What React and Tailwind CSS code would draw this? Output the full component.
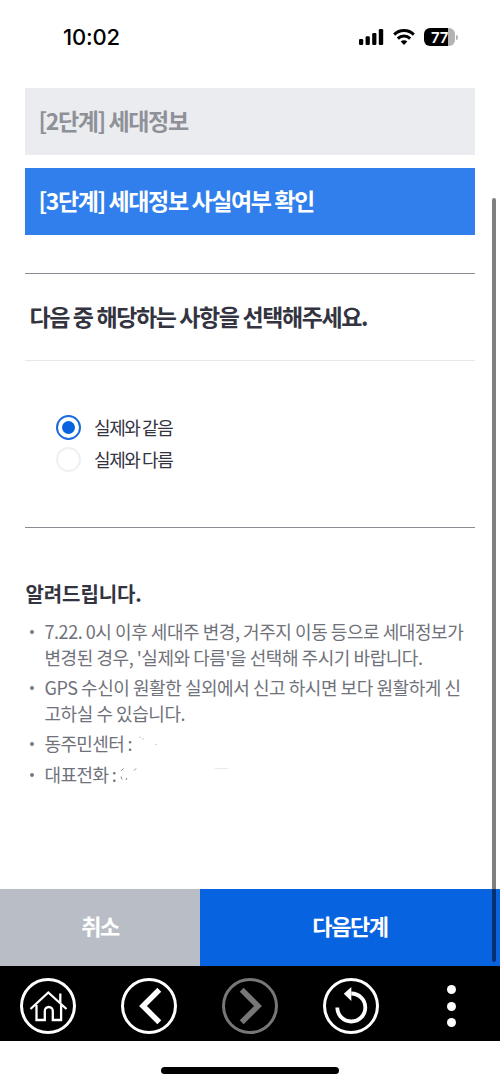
import { useState } from "react";

const options = ["실제와 같음", "실제와 다름"];

const StatusBar = () => (
  <div className="flex h-[88px] items-start justify-between pl-[63px] pr-[42px]">
    <span className="mt-[23px] font-['Inter'] text-[22px] font-medium leading-[28px] tracking-[-0.2px] text-black">
      10:02
    </span>
    <div className="mt-[28px] flex h-[18px] items-center">
      <svg width="26" height="18" viewBox="0 0 26 18" className="mr-[8px]">
        <rect x="0" y="11" width="4.2" height="6" rx="1.2" />
        <rect x="6.6" y="8.3" width="4.2" height="8.7" rx="1.2" />
        <rect x="13.2" y="5" width="4.2" height="12" rx="1.2" />
        <rect x="19.8" y="1" width="4.4" height="16" rx="1.2" />
      </svg>
      <svg width="22" height="18" viewBox="0 0 22 18" fill="none" stroke="#000" strokeWidth="3" className="mr-[9px]">
        <path d="M1.2 6.6a14 14 0 0 1 19.6 0" />
        <path d="M4.8 10.6a8.9 8.9 0 0 1 12.4 0" />
        <path d="M11 17l-3.3-3.4a4.6 4.6 0 0 1 6.6 0z" fill="#000" stroke="none" />
      </svg>
      <div className="flex h-[18px] w-[31px] items-center justify-center overflow-hidden rounded-[6px] bg-[linear-gradient(to_right,#000_78%,#b3b3b3_78%)]">
        <span className="font-['Inter'] text-[15px] font-semibold leading-none tracking-[-0.3px] text-white">77</span>
      </div>
      <div className="ml-[1px] h-[5px] w-[2px] rounded-r-full bg-[#b3b3b3]" />
    </div>
  </div>
);

const Radio = ({ label, checked, onSelect }) => (
  <button onClick={onSelect} className="flex h-8 items-center">
    <span
      className={
        checked
          ? "flex size-[25px] items-center justify-center rounded-full border-2 border-[#1a6ae0]"
          : "flex size-[25px] rounded-full border-2 border-[#f0f0f2]"
      }
    >
      {checked && <span className="size-[13px] rounded-full bg-[#0763df]" />}
    </span>
    <span className="ml-[13px] pb-[1px] text-[18px] leading-[30px] tracking-[-1.4px] text-[#33343f]">{label}</span>
  </button>
);

const Notice = ({ children }) => (
  <li className="flex">
    <span className="ml-[5px] mr-[10.5px] mt-[11px] size-[4px] shrink-0 rounded-full bg-[#777982]" />
    <div className="flex whitespace-nowrap">{children}</div>
  </li>
);

const NavIcon = ({ children, color = "#fff" }) => (
  <button>
    <svg width="56" height="56" viewBox="0 0 56 56" fill="none" stroke={color}>
      <circle cx="28" cy="28" r="26.5" strokeWidth="3" />
      {children}
    </svg>
  </button>
);

const App = () => {
  const [selected, setSelected] = useState(0);

  return (
    <div className="relative flex h-[1083px] w-[500px] flex-col overflow-hidden bg-white font-['Noto_Sans_CJK_KR',sans-serif]">
      <StatusBar />

      <main className="mx-[25px] flex-1">
        <h2 className="flex h-[67px] items-center bg-[#ebecf0] pb-[2px] pl-[13.5px] text-[23px] font-bold tracking-[-1.4px] text-[#8f9198]">
          [2단계] 세대정보
        </h2>
        <h2 className="mt-[13px] flex h-[67px] items-center bg-[#307fec] pb-[2px] pl-[13.5px] text-[23px] font-bold tracking-[-1.4px] text-white">
          [3단계] 세대정보 사실여부 확인
        </h2>

        <section className="mt-[38px] border-y border-[#8b8c93]">
          <h3 className="flex h-[87px] items-center border-b border-[#e8e8ea] pb-[1px] pl-[4.5px] text-[23px] font-bold tracking-[-1.4px] text-[#33343f]">
            다음 중 해당하는 사항을 선택해주세요.
          </h3>
          <div className="flex h-[166px] flex-col pl-[31px] pt-[50px]">
            {options.map((label, i) => (
              <Radio key={label} label={label} checked={selected === i} onSelect={() => setSelected(i)} />
            ))}
          </div>
        </section>

        <h4 className="mt-[50px] pl-[0.5px] text-[20px] font-bold leading-[32px] tracking-[-0.1px] text-[#33343f]">
          알려드립니다.
        </h4>
        <ul className="mt-[9px] flex flex-col gap-[5px] text-[18px] leading-[25.5px] tracking-[-0.45px] text-[#70727b]">
          <Notice>
            <p>
              7.22. 0시 이후 세대주 변경, 거주지 이동 등으로 세대정보가
              <br />
              변경된 경우, '실제와 다름'을 선택해 주시기 바랍니다.
            </p>
          </Notice>
          <Notice>
            <p>
              GPS 수신이 원활한 실외에서 신고 하시면 보다 원활하게 신
              <br />
              고하실 수 있습니다.
            </p>
          </Notice>
          <Notice>
            <span className="tracking-[-0.65px]">동주민센터 :</span>
            <svg width="30" height="25" viewBox="0 0 30 25" fill="none" stroke="#c9cad0">
              <path d="M7 6l2 .5M10 8.500l2-1M23 13.500h1.500" />
            </svg>
          </Notice>
          <Notice>
            <span className="tracking-[-0.6px]">대표전화 :</span>
            <svg width="115" height="25" viewBox="0 0 115 25" fill="none" stroke="#898b93">
              <path d="M5 9l2.500-2.500M5 14.500l1 3M10 18l.8-2M18 8.500l2-2" />
              <path d="M99 6.500h13" stroke="#e9e9ec" />
            </svg>
          </Notice>
        </ul>
      </main>

      <div className="flex h-[77px] text-[22px] font-bold tracking-[-1.4px] text-white">
        <button className="w-[200px] bg-[#b9bec6] pb-[4px]">취소</button>
        <button className="flex-1 bg-[#0763df] pb-[4px]">다음단계</button>
      </div>

      <nav className="flex h-[75px] items-center gap-[45px] bg-black pl-5 pt-[5px]">
        <NavIcon>
          <path
            d="M10.500 31L28.300 14.500 46.500 31M16.500 27v15h8.300V33a4 4 0 0 1 8 0v9h8.300V27M40.300 15.500v9.500"
            strokeWidth="2.300"
          />
        </NavIcon>
        <NavIcon>
          <path d="M38.300 11.700L22 28l16.300 16.300" strokeWidth="5.500" />
        </NavIcon>
        <NavIcon color="#777">
          <path d="M19.700 11.700L36 28l-16.300 16.300" strokeWidth="5.500" />
        </NavIcon>
        <NavIcon>
          <path d="M14.300 29.500a14 14 0 1 0 14-14" strokeWidth="3.800" />
          <path d="M28.300 9v14l-7.500-7.200z" fill="#fff" stroke="none" />
        </NavIcon>
        <button className="flex w-[55px] flex-col items-center gap-[7.5px]">
          <span className="size-[9px] rounded-full bg-white" />
          <span className="size-[9px] rounded-full bg-white" />
          <span className="size-[9px] rounded-full bg-white" />
        </button>
      </nav>

      <div className="flex h-[42px] justify-center pt-[26px]">
        <div className="h-[7px] w-[178px] rounded-full bg-black" />
      </div>

      <div className="absolute left-[492px] top-[198px] h-[764px] w-[4px] rounded-full bg-black/50" />
    </div>
  );
};

export default App;
